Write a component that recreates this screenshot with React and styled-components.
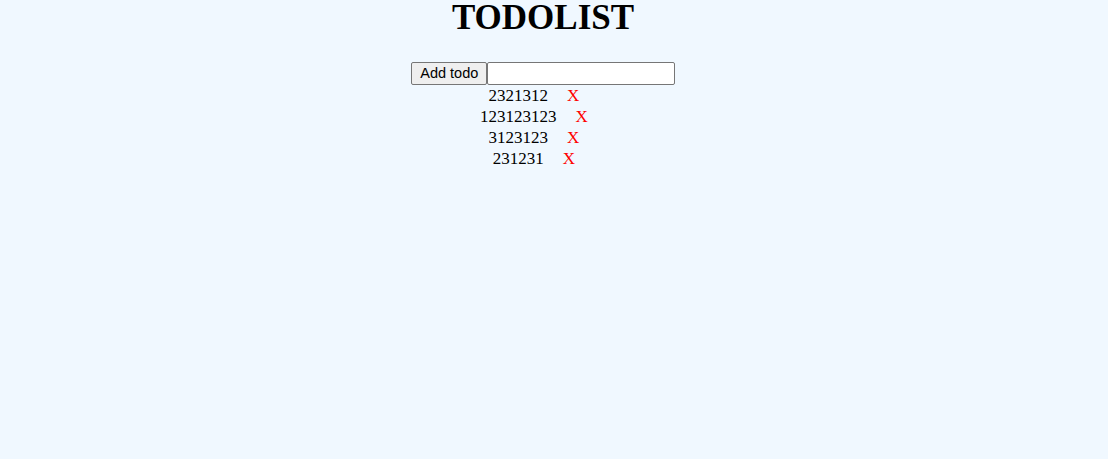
import React, { useState } from "react";
import styled, { createGlobalStyle } from "styled-components";

const GlobalStyle = createGlobalStyle`
  html, body {
    margin: 0;
    padding: 0;
    background: #f0f8ff;
  }
  body {
    font-family: "Liberation Serif", "Times New Roman", serif;
    min-height: 459px;
  }
`;

const Page = styled.div`
  display: flex;
  flex-direction: column;
  align-items: center;
  padding-right: 22px;
  min-height: 459px;
  box-sizing: border-box;
`;

const Title = styled.h1`
  margin: 0 0 27px;
  font-family: "Liberation Serif", "Times New Roman", serif;
  font-weight: bold;
  font-size: 35px;
  line-height: 35px;
  color: #000;
`;

const Form = styled.form`
  display: flex;
  align-items: flex-start;
  margin: 0;
  height: 23px;
`;

const AddButton = styled.button`
  box-sizing: border-box;
  width: 76px;
  height: 22.5px;
  padding: 0 7px;
  margin: 0;
  font-family: "Liberation Sans", Arial, sans-serif;
  font-size: 14.5px;
  line-height: 1;
  color: #000;
  background: #efefef;
  border: 1px solid #767676;
  border-radius: 2px;
  cursor: pointer;
`;

const TodoInput = styled.input`
  box-sizing: border-box;
  width: 187.5px;
  height: 23px;
  margin: 0;
  padding: 1px 3px;
  font-family: "Liberation Sans", Arial, sans-serif;
  font-size: 14.5px;
  background: #fff;
  border: 1px solid #767676;
  border-radius: 2px;
  outline: none;
`;

const List = styled.div`
  display: flex;
  flex-direction: column;
  align-items: center;
`;

const Row = styled.div`
  font-family: "Liberation Serif", "Times New Roman", serif;
  font-size: 17px;
  line-height: 21px;
  color: #000;
  white-space: nowrap;
`;

const Remove = styled.span`
  color: #ff0000;
  margin: 0 18px 0 19px;
  cursor: pointer;
`;

export default function App() {
  const [todos, setTodos] = useState(["2321312", "123123123", "3123123", "231231"]);
  const [value, setValue] = useState("");

  const add = (e) => {
    e.preventDefault();
    if (!value.trim()) return;
    setTodos([...todos, value]);
    setValue("");
  };

  return (
    <>
      <GlobalStyle />
      <Page>
        <Title>TODOLIST</Title>
        <Form onSubmit={add}>
          <AddButton type="submit">Add todo</AddButton>
          <TodoInput value={value} onChange={(e) => setValue(e.target.value)} />
        </Form>
        <List>
          {todos.map((t, i) => (
            <Row key={i}>
              {t}
              <Remove onClick={() => setTodos(todos.filter((_, j) => j !== i))}>X</Remove>
            </Row>
          ))}
        </List>
      </Page>
    </>
  );
}
